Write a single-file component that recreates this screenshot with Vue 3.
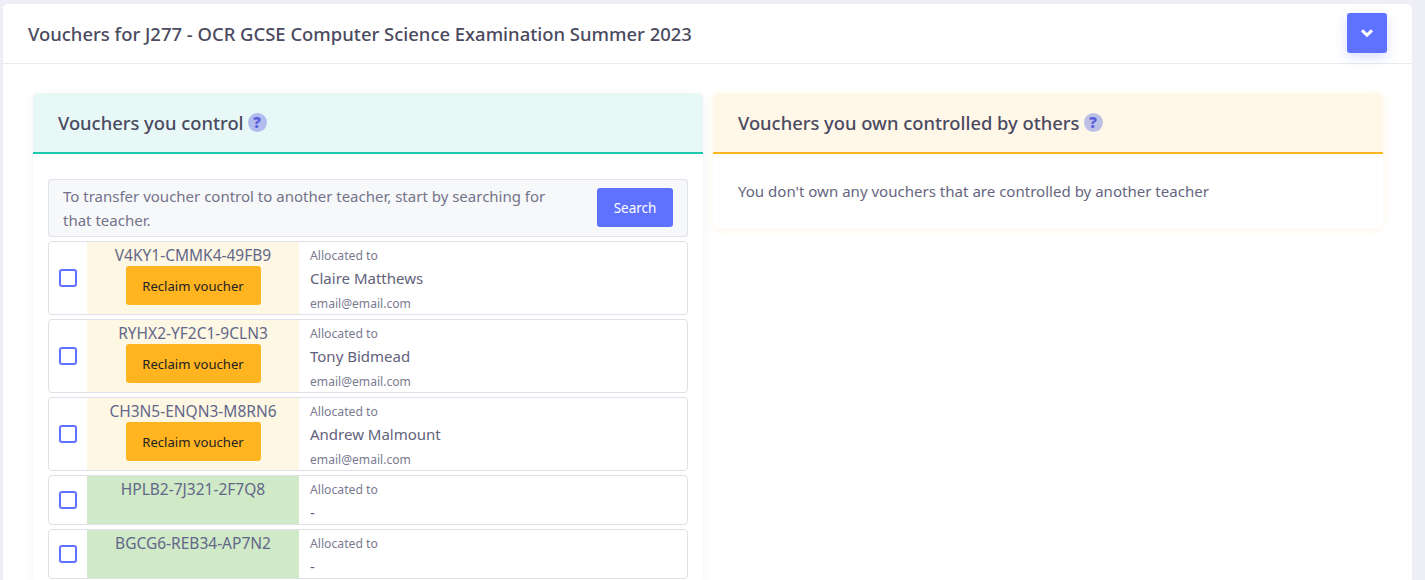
<script setup>
const rows = [
  { code: 'V4KY1-CMMK4-49FB9', name: 'Claire Matthews', email: 'email@email.com', reclaim: true },
  { code: 'RYHX2-YF2C1-9CLN3', name: 'Tony Bidmead', email: 'email@email.com', reclaim: true },
  { code: 'CH3N5-ENQN3-M8RN6', name: 'Andrew Malmount', email: 'email@email.com', reclaim: true },
  { code: 'HPLB2-7J321-2F7Q8', name: '-', email: '', reclaim: false },
  { code: 'BGCG6-REB34-AP7N2', name: '-', email: '', reclaim: false },
]
</script>

<template>
  <div class="page">
    <div class="card">
      <header class="card-head">
        <h1>Vouchers for J277 - OCR GCSE Computer Science Examination Summer 2023</h1>
        <button class="toggle" aria-label="Toggle">
          <svg width="14" height="10" viewBox="0 0 14 10"><path d="M2 2.4 L7 7.2 L12 2.4" fill="none" stroke="#fff" stroke-width="3" /></svg>
        </button>
      </header>
      <div class="card-body">
        <section class="panel">
          <div class="panel-head teal">
            <h2>Vouchers you control</h2>
            <span class="help">?</span>
          </div>
          <div class="panel-body">
            <div class="search">
              <p>To transfer voucher control to another teacher, start by searching for that teacher.</p>
              <button class="search-btn">Search</button>
            </div>
            <div v-for="r in rows" :key="r.code" class="row">
              <div class="check-col"><span class="check"></span></div>
              <div class="code-col" :class="r.reclaim ? 'warn' : 'ok'">
                <div class="code">{{ r.code }}</div>
                <button v-if="r.reclaim" class="reclaim">Reclaim voucher</button>
              </div>
              <div class="info-col">
                <div class="small">Allocated to</div>
                <div class="name">{{ r.name }}</div>
                <div v-if="r.email" class="small email">{{ r.email }}</div>
              </div>
            </div>
          </div>
        </section>
        <section class="panel right">
          <div class="panel-head amber">
            <h2>Vouchers you own controlled by others</h2>
            <span class="help">?</span>
          </div>
          <div class="panel-text">You don't own any vouchers that are controlled by another teacher</div>
        </section>
      </div>
    </div>
  </div>
</template>

<style>
html, body { margin: 0; background: #eeeff6; overflow: hidden; }
</style>

<style scoped>
.page {
  height: 580px;
  padding: 4px 13px 0 3px;
  box-sizing: border-box;
  overflow: hidden;
  font-family: "Noto Sans", "Open Sans", sans-serif;
  color: #5a5a72;
}
.card { background: #fff; border-radius: 5px 5px 0 0; height: 576px; overflow: hidden; }
.card-head {
  height: 60px;
  box-sizing: border-box;
  border-bottom: 1px solid #e9eaef;
  display: flex;
  align-items: center;
  justify-content: space-between;
  padding: 0 25px;
}
h1 { margin: 0; font-size: 18.45px; font-weight: 500; color: #4a4a60; }
h2 { margin: 0; font-size: 18.35px; font-weight: 500; color: #4a4a60; }
.toggle {
  width: 40px;
  height: 40px;
  margin-top: -1px;
  border: 0;
  border-radius: 3px;
  background: #5e72ff;
  box-shadow: 0 4px 12px rgba(94, 114, 255, .25);
  display: flex;
  align-items: center;
  justify-content: center;
  padding: 0;
}
.card-body {
  display: flex;
  align-items: flex-start;
  gap: 10px;
  padding: 29px 30px 0 30px;
}
.panel {
  width: 670px;
  flex: none;
  background: #fff;
  border-radius: 5px;
  box-shadow: 0 2px 10px rgba(70, 80, 120, .07);
}
.panel.right { box-shadow: 0 2px 10px rgba(255, 180, 30, .1); }
.panel-head {
  height: 61px;
  box-sizing: border-box;
  display: flex;
  align-items: center;
  gap: 4px;
  border-radius: 5px 5px 0 0;
}
.teal { background: #e8f8f6; border-bottom: 2px solid #1cc8b0; padding-left: 25px; }
.amber { background: #fff7e8; border-bottom: 2px solid #ffb420; padding-left: 25px; }
.help {
  width: 19px;
  height: 19px;
  border-radius: 50%;
  background: #b2bbee;
  color: #5a5fdc;
  font-size: 15px;
  font-weight: 900;
  line-height: 19px;
  text-align: center;
}
.amber .help { background: #bcc0e6; }
.panel-body { padding: 25px 15px 0; }
.search {
  height: 58px;
  box-sizing: border-box;
  background: #f7f8fa;
  border: 1px solid #e2e3ea;
  border-radius: 3px;
  display: flex;
  align-items: center;
  justify-content: space-between;
  padding: 0 14px;
  margin-bottom: 4px;
}
.search p { margin: 0; width: 500px; font-size: 15px; line-height: 24px; color: #73738a; }
.search-btn {
  width: 76px;
  height: 39px;
  margin-top: -1px;
  border: 0;
  border-radius: 3px;
  background: #5e72ff;
  color: #fff;
  font: 13.5px "Noto Sans", sans-serif;
  padding: 0;
}
.row {
  display: flex;
  border: 1px solid #e0e1e8;
  border-radius: 4px;
  margin-bottom: 4px;
  overflow: hidden;
  background: #fff;
}
.check-col { width: 38px; flex: none; display: flex; align-items: center; justify-content: center; }
.check {
  width: 14px;
  height: 14px;
  border: 2px solid #5e72ff;
  border-radius: 3px;
}
.code-col {
  width: 212px;
  flex: none;
  display: flex;
  flex-direction: column;
  align-items: center;
  padding-top: 2px;
  box-sizing: border-box;
}
.warn { background: #fef7e3; }
.ok { background: #d0e9c6; }
.code { font-size: 15.5px; line-height: 22px; color: #62678a; }
.reclaim {
  width: 135px;
  height: 39px;
  margin: 0 0 2px;
  border: 0;
  border-radius: 3px;
  background: #ffb420;
  color: #222;
  font: 13.1px "Noto Sans", sans-serif;
  padding: 0;
}
.info-col { padding: 3px 0 0 11px; min-height: 48px; box-sizing: border-box; }
.small { font-size: 12.2px; line-height: 22px; color: #7a7a90; }
.email { font-size: 12.1px; line-height: 20px; margin-top: 5px; }
.name { font-size: 15px; line-height: 22px; color: #62627a; }
.panel-text { padding: 25px 25px 25px; font-size: 15.05px; line-height: 24px; color: #666680; }
</style>
